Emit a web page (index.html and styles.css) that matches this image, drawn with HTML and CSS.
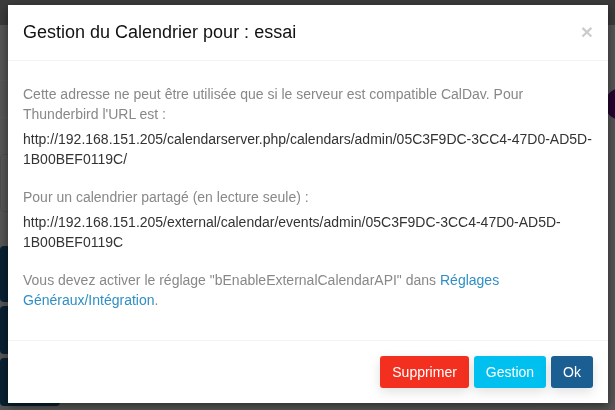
FILE: index.html
```html
<!DOCTYPE html>
<html lang="fr">
<head>
<meta charset="utf-8">
<title>Gestion du Calendrier</title>
<link rel="stylesheet" href="styles.css">
</head>
<body>
<div class="page">
  <div class="navbar"></div>
  <div class="content">
    <div class="side">
      <div class="row-line"></div>
      <div class="row-line"></div>
      <div class="side-box"></div>
      <div class="side-btn tall"></div>
      <div class="side-btn"></div>
      <div class="side-btn"></div>
    </div>
  </div>
</div>
<div class="avatar"></div>
<div class="backdrop"></div>
<div class="modal">
  <div class="modal-header">
    <h4 class="modal-title">Gestion du Calendrier pour : essai</h4>
    <span class="close">&times;</span>
  </div>
  <div class="modal-body">
    <p class="muted">Cette adresse ne peut être utilisée que si le serveur est compatible CalDav. Pour Thunderbird l'URL est :</p>
    <div class="url">http://192.168.151.205/calendarserver.php/calendars/admin/05C3F9DC-3CC4-47D0-AD5D-1B00BEF0119C/</div>
    <p class="muted">Pour un calendrier partagé (en lecture seule) :</p>
    <div class="url">http://192.168.151.205/external/calendar/events/admin/05C3F9DC-3CC4-47D0-AD5D-1B00BEF0119C</div>
    <p class="muted last">Vous devez activer le réglage "bEnableExternalCalendarAPI" dans <a href="#">Réglages Généraux/Intégration</a>.</p>
  </div>
  <div class="modal-footer">
    <button class="btn btn-danger">Supprimer</button>
    <button class="btn btn-info">Gestion</button>
    <button class="btn btn-primary">Ok</button>
  </div>
</div>
</body>
</html>
```

FILE: styles.css
```css
* { box-sizing: border-box; }
html, body { margin: 0; padding: 0; height: 100%; }
body {
  font-family: "Liberation Sans", Arial, Helvetica, sans-serif;
  font-size: 14px;
  line-height: 20px;
  color: #333;
  background: #f6f6f6;
  overflow: hidden;
}
.page { height: 100%; }
.navbar { height: 25px; background: #aaa; }
.content { display: flex; height: calc(100% - 25px); background: #f6f6f6; }
.side { width: 60px; display: flex; flex-direction: column; padding-top: 55px; }
.row-line { height: 1px; background: #fff; margin-bottom: 36px; }
.side-box { height: 75px; border: 1px solid #ddd; border-radius: 4px; background: #fafafa; margin-bottom: 34px; }
.side-btn { height: 62px; background: #1b5e91; border-radius: 4px; margin-bottom: 4px; }
.side-btn.tall { height: 72px; }
.avatar {
  position: absolute; left: 605px; top: 88px;
  width: 32px; height: 32px; border-radius: 50%;
  background: #6a0f86;
}
.backdrop { position: fixed; inset: 0; background: rgba(0,0,0,0.65); }
.modal {
  position: fixed; left: 8px; top: 5px; width: 600px;
  background: #fff;
  box-shadow: 0 3px 9px rgba(0,0,0,0.5);
}
.modal-header {
  position: relative;
  padding: 15px;
  border-bottom: 1px solid #f4f4f4;
}
.modal-title {
  margin: 0;
  font-size: 18px;
  font-weight: normal;
  line-height: 25px;
  color: #111;
}
.close {
  position: absolute; right: 15px; top: 15px;
  font-size: 21px; font-weight: bold; line-height: 24px;
  color: #000; opacity: 0.2;
}
.modal-body { padding: 23px 15px 30px; }
.modal-body p { margin: 0 0 5px; }
.muted { color: #888; }
.url { color: #333; margin-bottom: 18px; }
.modal-body p.last { margin: 0; }
a { color: #2f8fc5; text-decoration: none; }
.modal-footer {
  padding: 15px;
  border-top: 1px solid #f4f4f4;
  display: flex;
  justify-content: flex-end;
  gap: 5px;
}
.btn {
  font-family: inherit;
  font-size: 14px;
  line-height: 20px;
  padding: 6px 12px;
  border: 0;
  border-radius: 3px;
  color: #fff;
  box-shadow: 0 4px 12px rgba(0,0,0,0.12);
}
.btn-danger { background: #f3301f; }
.btn-info { background: #00c0ef; }
.btn-primary { background: #1b5e91; }
```
